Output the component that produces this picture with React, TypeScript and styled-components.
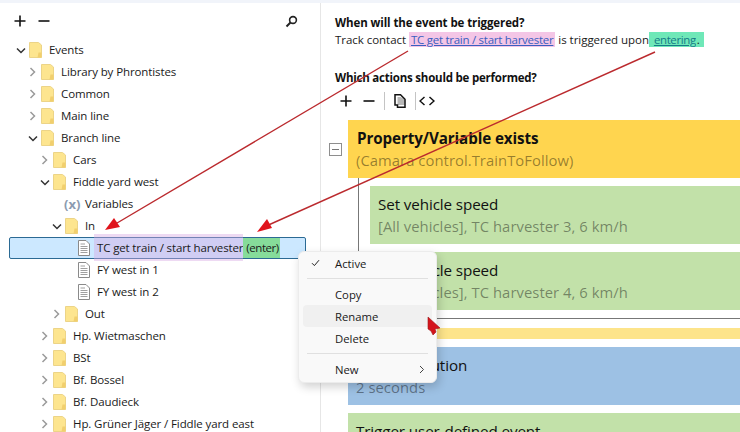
import React from 'react';
import styled, { createGlobalStyle } from 'styled-components';

const GlobalStyle = createGlobalStyle`
    html, body {
        margin: 0;
        padding: 0;
        background: #ffffff;
    }
    body {
        font-family: "Open Sans", "Noto Sans", sans-serif;
        color: #1a1a1a;
    }
`;

const Window = styled.div`
    position: relative;
    width: 740px;
    height: 432px;
    overflow: hidden;
    display: flex;
    flex-direction: column;
    background: #ffffff;
`;

const TopStrip = styled.div`
    height: 3px;
    flex: none;
    background: #f1f4fa;
`;

const Panes = styled.div`
    flex: 1;
    min-height: 0;
    display: flex;
`;

const TreePane = styled.div`
    width: 320px;
    flex: none;
    border-right: 1px solid #e6e6e6;
    box-sizing: content-box;
`;

const TreeToolbar = styled.div`
    height: 36px;
    display: flex;
    align-items: center;
    padding: 0 22px 0 14px;
    gap: 12px;
    box-sizing: border-box;
`;

const ToolIcon = styled.svg<{ $shift?: number }>`
    display: block;
    flex: none;
    margin-left: ${(p) => p.$shift ?? 0}px;
`;

const Spacer = styled.div`
    flex: 1;
`;

const Row = styled.div<{ $depth: number }>`
    position: relative;
    height: 22px;
    display: flex;
    align-items: center;
    font-size: 11.5px;
    letter-spacing: -0.1px;
    white-space: nowrap;
    padding-left: ${(p) => 15 + p.$depth * 12}px;
`;

const SelectedRow = styled(Row)`
    margin: 0 14px 0 9px;
    padding-left: ${(p) => 5 + p.$depth * 12}px;
    background: #cce8ff;
    border: 1px solid #2b6a94;
    border-radius: 2px;
    box-sizing: border-box;
`;

const ChevronSlot = styled.span`
    width: 11px;
    height: 12px;
    flex: none;
    display: flex;
    align-items: center;
    justify-content: center;
    margin-right: 3px;
`;

const FolderIcon = styled.svg`
    display: block;
    flex: none;
    margin-right: 7px;
`;

const DocIcon = styled.svg`
    display: block;
    flex: none;
    margin: 0 7px 0 15px;
`;

const VariableMark = styled.span`
    width: 16px;
    flex: none;
    margin: 0 5px 0 13px;
    color: #8c9bb0;
    font-weight: 700;
    font-size: 13px;
    letter-spacing: 0;
    text-align: center;
`;

const RowText = styled.span`
    line-height: 20px;
`;

const MarkedName = styled.span`
    position: relative;
    display: inline-block;
    padding: 0 0 0 3px;
    margin-left: -3px;
    letter-spacing: -0.14px;
    &::before {
        content: '';
        position: absolute;
        inset: -4px 0 -3px 0;
        background: rgba(214, 166, 226, 0.42);
    }
`;

const MarkedNameText = styled.span`
    position: relative;
`;

const MarkedKind = styled.span`
    position: relative;
    display: inline-block;
    background: #86dc9a;
    padding: 0 1px 0 3px;
    letter-spacing: -0.45px;
`;

const DetailPane = styled.div`
    flex: 1;
    min-width: 0;
    padding: 11px 0 0 14px;
`;

const Question = styled.div<{ $tracking: number }>`
    font-size: 11.5px;
    font-weight: 700;
    line-height: 17px;
    letter-spacing: ${(p) => p.$tracking}px;
    color: #111111;
`;

const Sentence = styled.div`
    font-size: 11.5px;
    line-height: 18px;
    letter-spacing: -0.04px;
    margin-bottom: 20px;
    white-space: nowrap;
`;

const TrackLink = styled.a`
    color: #3a60c0;
    text-decoration: underline;
    background: #f4c6e6;
    padding: 0 2px;
    letter-spacing: -0.27px;
`;

const StateLink = styled.a`
    color: #157a88;
    text-decoration: underline;
    background: #6fe8b8;
    padding: 0 0 0 5px;
    margin-left: -3px;
    letter-spacing: -0.38px;
`;

const Dot = styled.span`
    background: #6fe8b8;
    padding: 0 4px 0 1px;
`;

const ActionToolbar = styled.div`
    height: 24px;
    margin-top: 3px;
    display: flex;
    align-items: center;
    padding-left: 5px;
    gap: 9px;
`;

const ToolSeparator = styled.div`
    width: 1px;
    height: 18px;
    background: #c4c4c4;
`;

const ActionList = styled.div`
    position: relative;
    margin-top: 7px;
    padding-left: 13px;
    display: flex;
    flex-direction: column;
`;

const CollapseBox = styled.div`
    position: absolute;
    left: -6px;
    top: 23px;
    width: 13px;
    height: 13px;
    box-sizing: border-box;
    border: 1px solid #8e8e8e;
    display: flex;
    align-items: center;
    justify-content: center;
    &::after {
        content: '';
        width: 7px;
        height: 1px;
        background: #777777;
    }
`;

const Card = styled.div<{ $color: string }>`
    height: 58px;
    box-sizing: border-box;
    padding: 8px 8px;
    background: ${(p) => p.$color};
    flex: none;
`;

const BranchBody = styled.div`
    margin-left: 10px;
    padding: 8px 0 8px 11px;
    border-left: 1px solid #777777;
    border-bottom: 1px solid #777777;
    display: flex;
    flex-direction: column;
    gap: 8px;
`;

const PaleBar = styled.div`
    height: 11px;
    margin: 9px 0 8px;
    background: #fde48a;
    flex: none;
`;

const SequenceCards = styled.div`
    display: flex;
    flex-direction: column;
    gap: 8px;
`;

const CardTitle = styled.div<{ $bold?: boolean }>`
    font-size: 15.2px;
    line-height: 21px;
    letter-spacing: -0.1px;
    font-weight: ${(p) => (p.$bold ? 700 : 400)};
    margin-left: ${(p) => (p.$bold ? 1 : 0)}px;
    color: #111111;
`;

const CardSub = styled.div`
    font-size: 14.8px;
    line-height: 23px;
    letter-spacing: 0.05px;
    color: rgba(0, 0, 0, 0.42);
    white-space: nowrap;
`;

const Menu = styled.div`
    position: absolute;
    left: 298px;
    top: 251px;
    width: 139px;
    height: 132px;
    box-sizing: border-box;
    padding: 0 4px;
    background: #f9f9f9;
    border-radius: 6px;
    border: 1px solid #ececec;
    box-shadow: 2px 4px 10px rgba(0, 0, 0, 0.18);
    font-size: 11.3px;
`;

const MenuItem = styled.div<{ $hover?: boolean }>`
    height: 22px;
    display: flex;
    align-items: center;
    padding-left: 32px;
    position: relative;
    border-radius: 4px;
    background: ${(p) => (p.$hover ? '#f0f0f0' : 'transparent')};
    color: #1a1a1a;
`;

const MenuCheck = styled.svg`
    position: absolute;
    left: 8px;
    top: 7px;
`;

const MenuArrow = styled.svg`
    position: absolute;
    right: 7px;
    top: 7px;
`;

const MenuLine = styled.div`
    height: 1px;
    margin: 4px;
    background: #e0e0e0;
`;

const Overlay = styled.svg`
    position: absolute;
    left: 0;
    top: 0;
    pointer-events: none;
`;

const Folder = () => (
    <FolderIcon width="13" height="16" viewBox="0 0 13 16">
        <path d="M0.5 0.5H9.5L12.5 3V15.5H0.5Z" fill="#fde58f" stroke="#ecd488" />
        <path d="M9.5 10.5L8.5 15.5H12.5V10.5Z" fill="#f1cf6e" />
    </FolderIcon>
);

const Doc = () => (
    <DocIcon width="12" height="16" viewBox="0 0 12 16">
        <path d="M0.5 0.5H8L11.5 4V15.5H0.5Z" fill="#ffffff" stroke="#8a8a8a" />
        <path d="M2.5 4H7M2.5 6.5H9.5M2.5 8.5H9.5M2.5 10.5H9.5M2.5 12.5H9.5" stroke="#a0a0a0" fill="none" />
    </DocIcon>
);

const Chevron = ({ open }: { open: boolean }) => (
    <ChevronSlot>
        {open ? (
            <svg width="10" height="7" viewBox="0 0 10 7">
                <path d="M1 1.5L5 5.5L9 1.5" fill="none" stroke="#333333" strokeWidth="1.5" />
            </svg>
        ) : (
            <svg width="7" height="10" viewBox="0 0 7 10">
                <path d="M1.5 1L5.5 5L1.5 9" fill="none" stroke="#9a9a9a" strokeWidth="1.5" />
            </svg>
        )}
    </ChevronSlot>
);

const Plus = () => (
    <ToolIcon width="12" height="12" viewBox="0 0 12 12">
        <path d="M6 0.5V11.5M0.5 6H11.5" stroke="#111111" strokeWidth="1.6" />
    </ToolIcon>
);

const Minus = ({ shift }: { shift?: number }) => (
    <ToolIcon $shift={shift} width="12" height="12" viewBox="0 0 12 12">
        <path d="M0.5 6H11.5" stroke="#111111" strokeWidth="1.6" />
    </ToolIcon>
);

type TreeItem = { label: string; depth: number; open?: boolean };

const before: TreeItem[] = [
    { label: 'Events', depth: 0, open: true },
    { label: 'Library by Phrontistes', depth: 1 },
    { label: 'Common', depth: 1 },
    { label: 'Main line', depth: 1 },
    { label: 'Branch line', depth: 1, open: true },
    { label: 'Cars', depth: 2 },
    { label: 'Fiddle yard west', depth: 2, open: true },
];

const after: TreeItem[] = [
    { label: 'Out', depth: 3 },
    { label: 'Hp. Wietmaschen', depth: 2 },
    { label: 'BSt', depth: 2 },
    { label: 'Bf. Bossel', depth: 2 },
    { label: 'Bf. Daudieck', depth: 2 },
    { label: 'Hp. Grüner Jäger / Fiddle yard east', depth: 2 },
];

const FolderRow = ({ label, depth, open }: TreeItem) => (
    <Row $depth={depth}>
        <Chevron open={!!open} />
        <Folder />
        <RowText>{label}</RowText>
    </Row>
);

const App: React.FC = () => {
    return (
        <Window>
            <GlobalStyle />
            <TopStrip />
            <Panes>
                <TreePane>
                    <TreeToolbar>
                        <Plus />
                        <Minus />
                        <Spacer />
                        <ToolIcon width="13" height="13" viewBox="0 0 13 13">
                            <circle cx="8" cy="5" r="3.4" fill="none" stroke="#222222" strokeWidth="1.6" />
                            <path d="M5.5 7.5L1.5 11.5" stroke="#222222" strokeWidth="2" />
                        </ToolIcon>
                    </TreeToolbar>
                    <div>
                        {before.map((item) => (
                            <FolderRow key={item.label} {...item} />
                        ))}
                        <Row $depth={3}>
                            <VariableMark>(x)</VariableMark>
                            <RowText>Variables</RowText>
                        </Row>
                        <FolderRow label="In" depth={3} open />
                        <SelectedRow $depth={4}>
                            <Doc />
                            <RowText>
                                <MarkedName>
                                    <MarkedNameText>TC get train / start harvester</MarkedNameText>
                                </MarkedName>
                                <MarkedKind>(enter)</MarkedKind>
                            </RowText>
                        </SelectedRow>
                        <Row $depth={4}>
                            <Doc />
                            <RowText>FY west in 1</RowText>
                        </Row>
                        <Row $depth={4}>
                            <Doc />
                            <RowText>FY west in 2</RowText>
                        </Row>
                        {after.map((item) => (
                            <FolderRow key={item.label} {...item} />
                        ))}
                    </div>
                </TreePane>
                <DetailPane>
                    <Question $tracking={-0.1}>When will the event be triggered?</Question>
                    <Sentence>
                        Track contact <TrackLink>TC get train / start harvester</TrackLink> is triggered upon{' '}
                        <StateLink>entering</StateLink>
                        <Dot>.</Dot>
                    </Sentence>
                    <Question $tracking={-0.22}>Which actions should be performed?</Question>
                    <ActionToolbar>
                        <Plus />
                        <Minus shift={2} />
                        <ToolSeparator />
                        <ToolIcon width="12" height="14" viewBox="0 0 12 14">
                            <path d="M1 0.8H6.5L11 5.3V13.2H3.5V11H1Z" fill="none" stroke="#111111" strokeWidth="1.5" />
                            <path d="M3.5 3V11H11V5.3L6.5 3Z" fill="#333333" opacity="0.35" />
                        </ToolIcon>
                        <ToolSeparator />
                        <ToolIcon $shift={-6} width="16" height="10" viewBox="0 0 16 10">
                            <path d="M5.5 1L1 5L5.5 9M10.5 1L15 5L10.5 9" fill="none" stroke="#111111" strokeWidth="1.5" />
                        </ToolIcon>
                    </ActionToolbar>
                    <ActionList>
                        <CollapseBox />
                        <Card $color="#ffd54f">
                            <CardTitle $bold>Property/Variable exists</CardTitle>
                            <CardSub>(Camara control.TrainToFollow)</CardSub>
                        </Card>
                        <BranchBody>
                            <Card $color="#c2e1a9">
                                <CardTitle>Set vehicle speed</CardTitle>
                                <CardSub>[All vehicles], TC harvester 3, 6 km/h</CardSub>
                            </Card>
                            <Card $color="#c2e1a9">
                                <CardTitle>Set vehicle speed</CardTitle>
                                <CardSub>[All vehicles], TC harvester 4, 6 km/h</CardSub>
                            </Card>
                        </BranchBody>
                        <PaleBar />
                        <SequenceCards>
                            <Card $color="#9dc1e4">
                                <CardTitle>Delay execution</CardTitle>
                                <CardSub>2 seconds</CardSub>
                            </Card>
                            <Card $color="#c2e1a9">
                                <CardTitle>Trigger user-defined event</CardTitle>
                            </Card>
                        </SequenceCards>
                    </ActionList>
                </DetailPane>
            </Panes>
            <Overlay width="740" height="432" viewBox="0 0 740 432">
                <path d="M408 51L112 226" stroke="#bb2a2e" strokeWidth="1.4" />
                <path d="M105 230L120 227L114 218Z" fill="#e0141c" />
                <path d="M655 52L264 227" stroke="#bb2a2e" strokeWidth="1.4" />
                <path d="M257 232L272 228L267 219Z" fill="#e0141c" />
            </Overlay>
            <Menu>
                <MenuItem>
                    <MenuCheck width="9" height="8" viewBox="0 0 9 8">
                        <path d="M1 4.2L3.4 6.6L8 1.2" fill="none" stroke="#222222" strokeWidth="1" />
                    </MenuCheck>
                    Active
                </MenuItem>
                <MenuLine />
                <MenuItem>Copy</MenuItem>
                <MenuItem $hover>Rename</MenuItem>
                <MenuItem>Delete</MenuItem>
                <MenuLine />
                <MenuItem>
                    New
                    <MenuArrow width="6" height="9" viewBox="0 0 6 9">
                        <path d="M1 1L4.5 4.5L1 8" fill="none" stroke="#444444" strokeWidth="1" />
                    </MenuArrow>
                </MenuItem>
            </Menu>
            <Overlay width="740" height="432" viewBox="0 0 740 432">
                <path d="M428 317L428 329L431 331L433 335L436 332L435 329L440 328Z" fill="#d4141c" stroke="#9c1a1a" strokeWidth="0.6" />
            </Overlay>
        </Window>
    );
};

export default App;
